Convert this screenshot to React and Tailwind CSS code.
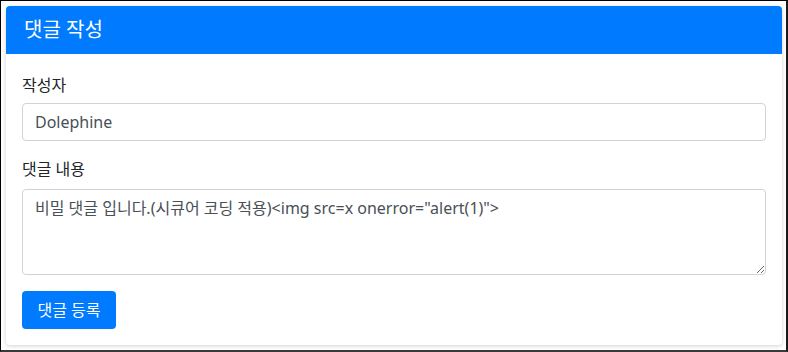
import React from 'react';

const font = { fontFamily: '"Noto Sans", "Noto Sans CJK KR", sans-serif' };

export default function App() {
  return (
    <div
      className="h-[352px] w-[788px] overflow-hidden border-l border-t border-r-2 border-b-2 border-l-black border-t-black border-r-[#1a1a1a] border-b-[#3a3a3a] bg-white pl-[5px] pt-[5px]"
      style={font}
    >
      <div className="w-[776px] overflow-hidden rounded-[4px] bg-white shadow-[0_1px_4px_rgba(0,0,0,0.18)]">
        {/* Header */}
        <div className="flex h-[48px] items-center bg-[#007bff] px-[18px] text-[20px] text-white">
          댓글 작성
        </div>

        {/* Body */}
        <div className="px-4 pb-4 pt-[19px] text-[16px] text-[#212529]">
          <label className="mb-[6px] block leading-6">작성자</label>
          <input
            className="mb-4 block h-[38px] w-full rounded-[4px] border border-[#ced4da] px-3 text-[16px] text-[#495057] outline-none"
            defaultValue="Dolephine"
            style={font}
          />

          <label className="mb-[8px] block leading-6">댓글 내용</label>
          <textarea
            className="mb-4 block h-[86px] w-full rounded-[4px] border border-[#ced4da] px-3 py-[6px] text-[16px] leading-6 text-[#495057] outline-none"
            defaultValue={'비밀 댓글 입니다.(시큐어 코딩 적용)<img src=x onerror="alert(1)">'}
            style={font}
          />

          <button
            className="flex h-[38px] w-[94px] items-center justify-center rounded-[4px] bg-[#007bff] text-[16px] text-white"
            style={font}
          >
            댓글 등록
          </button>
        </div>
      </div>
    </div>
  );
}
